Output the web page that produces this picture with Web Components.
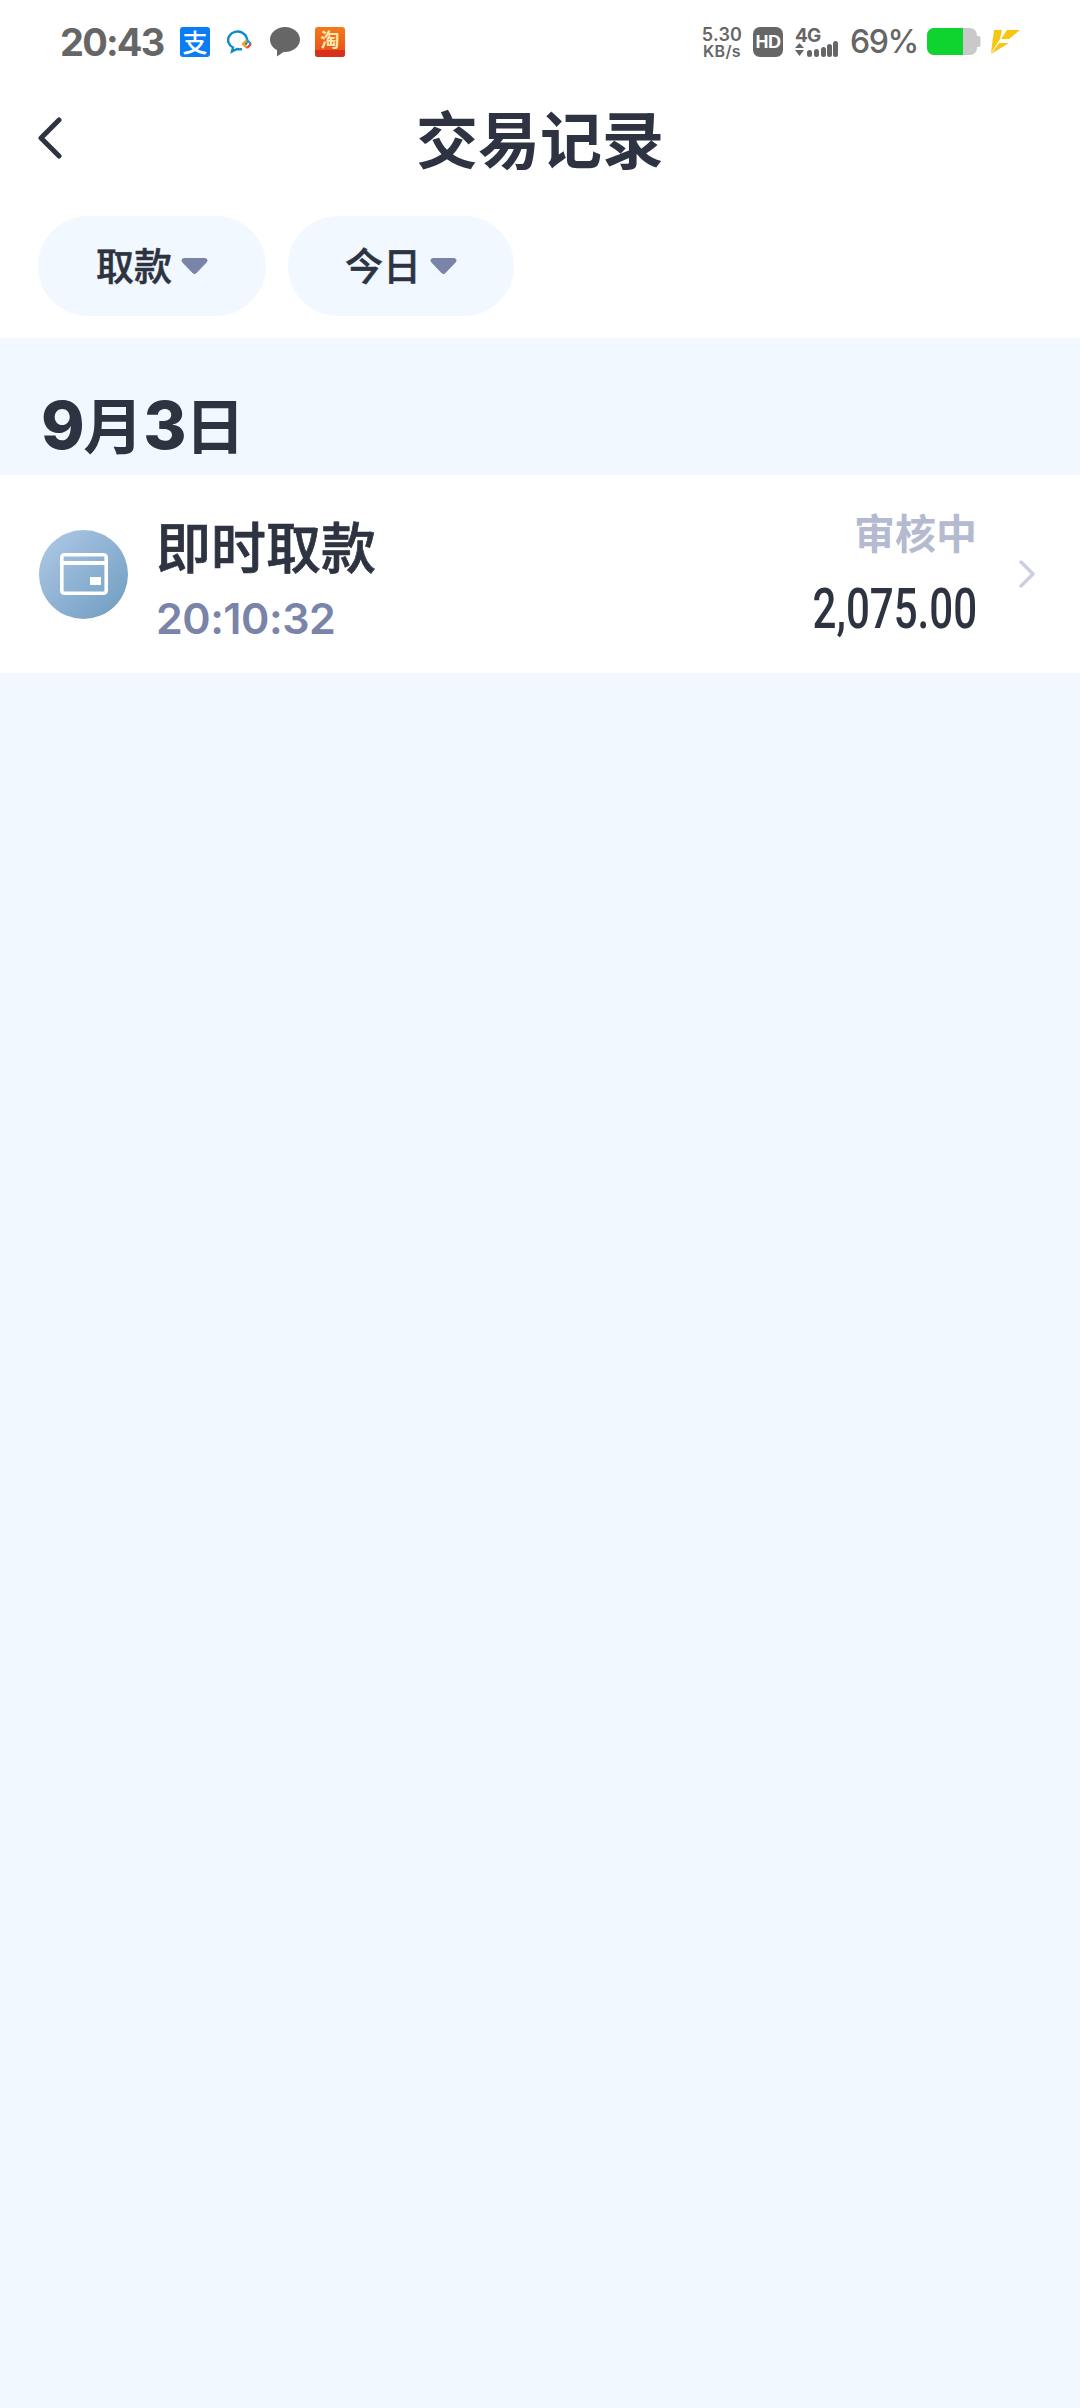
<!DOCTYPE html>
<html lang="zh"><head><meta charset="utf-8"><title>交易记录</title>
<style>
html,body{margin:0;padding:0;background:#f1f8ff}
body{width:1080px;height:2408px;overflow:hidden;font-family:Inter,"Noto Sans CJK SC",sans-serif;color:#2e3342}
</style></head><body>
<records-page></records-page>
<script>
function el(name, css, html){
  customElements.define(name, class extends HTMLElement{
    constructor(){super();this.attachShadow({mode:'open'}).innerHTML='<style>'+css+'</style>'+html;}
  });
}
const CJK='Inter,"Noto Sans CJK SC",sans-serif';
el('status-bar',`
:host{display:flex;align-items:center;height:84px;background:#fff;padding:0 60px;box-sizing:border-box;color:#666;font-family:${CJK}}
.l,.r{display:flex;align-items:center}
.r{margin-left:auto}
.time{font:700 38px/1 Inter,sans-serif;letter-spacing:-1.8px;width:104px;white-space:nowrap}
svg{display:block;flex:none}
.ali{width:30px;height:30px;border-radius:3px;background:#0a7df5;color:#fff;font:500 25px/29px "Noto Sans CJK SC",sans-serif;text-align:center;margin-left:16px}
.tao{width:30px;height:30px;border-radius:3px;background:linear-gradient(#f47a1c,#ea4a17);position:relative;margin-left:15px;color:#ffe9b0;text-align:center;font:700 19px/23px "Noto Sans CJK SC",sans-serif}
.tao i{position:absolute;left:0;right:0;bottom:0;height:7px;background:#d8301a;border-radius:0 0 3px 3px}
.speed{display:flex;flex-direction:column;align-items:center;font:600 18px/17px Inter,sans-serif;width:42px;letter-spacing:.2px}
.speed b{font-weight:600;font-size:16px;line-height:16px;letter-spacing:.3px}
.hd{width:30px;height:30px;border-radius:7px;background:#666;color:#fff;font:700 18px/30px "Liberation Sans",sans-serif;text-align:center;margin-left:10px;letter-spacing:-.5px}
.net{margin-left:12px;position:relative;width:44px;height:30px}
.net span{position:absolute;left:0;top:-1px;font:700 19px/19px Inter,sans-serif;letter-spacing:-.8px}
.pct{font:500 32px/1 Inter,sans-serif;margin-left:11px;width:67px;letter-spacing:-1.4px;white-space:nowrap}
`,`
<div class="l"><span class="time">20:43</span><span class="ali">支</span>
<svg style="margin-left:17px" width="26" height="24" viewBox="0 0 26 24"><path d="M19 14A9.500 8.500 0 1 0 6 17.500L5 21.500l5-2.500a10 10 0 0 0 4 .3" fill="none" stroke="#0f8bc6" stroke-width="2.400" stroke-linecap="round"/><path d="M20 10l-4 4 4 4" fill="none" stroke="#f2a11f" stroke-width="2.400"/><path d="M20 10l4 4" stroke="#1da1d6" stroke-width="2.400"/><path d="M20 18l4-4" stroke="#e8483a" stroke-width="2.400"/></svg>
<svg style="margin-left:17px" width="30" height="30" viewBox="0 0 30 30"><path d="M15 0C6.700 0 0 5.600 0 12.500 0 17 2.800 20.900 7 23.100L7 29.500 13.500 25Q14.300 25 15 25C23.300 25 30 19.400 30 12.500S23.300 0 15 0Z" fill="#666"/></svg>
<span class="tao">淘<i></i></span></div>
<div class="r"><span class="speed">5.30<b>KB/s</b></span><span class="hd">HD</span>
<span class="net"><span>4G</span>
<svg width="44" height="30" viewBox="0 0 44 30"><path d="M0 21l4.500-5 4.500 5zM0 23h9l-4.500 6z" fill="#666"/><rect x="12" y="23" width="5" height="7" rx="2.500" fill="#666"/><rect x="19" y="22" width="5" height="8" rx="2.500" fill="#666"/><rect x="26" y="20" width="5" height="10" rx="2.500" fill="#666"/><rect x="32" y="17" width="5" height="13" rx="2.500" fill="#666"/><rect x="38" y="14" width="5" height="16" rx="2.500" fill="#666"/></svg></span>
<span class="pct">69%</span>
<svg style="margin-left:10px" width="56" height="28" viewBox="0 0 56 28"><rect x="0" y="0" width="50" height="27" rx="7" fill="#c9c9c9"/><path d="M7 0H36V27H7A7 7 0 0 1 0 20V7A7 7 0 0 1 7 0Z" fill="#0fd42f"/><path d="M50 8h1.500a2 2 0 0 1 2 2v7a2 2 0 0 1-2 2H50Z" fill="#c9c9c9"/></svg>
<svg style="margin-left:6px;margin-right:-1px" width="32" height="26" viewBox="0 0 32 26"><path d="M5 1H13L11 10 2 24 5 1ZM18 1H31L20 10H12ZM10 14H20L2 25Z" fill="#f7c512"/></svg>
</div>`);

el('nav-header',`
:host{display:block;position:relative;height:116px;background:#fff}
h1{margin:0;font:700 62px/116px ${CJK};text-align:center;color:#2e3342}
svg{position:absolute;left:37px;top:33px}
`,`<svg width="26" height="42" viewBox="0 0 26 42"><path d="M22 3 4 21l18 18" fill="none" stroke="#2e3342" stroke-width="5" stroke-linecap="round" stroke-linejoin="round"/></svg><h1><slot></slot></h1>`);

el('filter-bar',`
:host{display:flex;gap:22px;background:#fff;padding:16px 38px 22px}
`,`<slot></slot>`);

el('filter-pill',`
:host{display:flex;align-items:center;justify-content:center;gap:9px;width:228px;height:100px;border-radius:50px;background:#f1f8ff;font:500 38px/1 ${CJK};-webkit-text-stroke:.5px #2e3342;color:#2e3342;box-sizing:border-box}
svg{display:block}
`,`<slot></slot><svg width="27" height="16" viewBox="0 0 27 16"><path d="M3 0h21a2.500 2.500 0 0 1 1.800 4.200L15.500 15a3 3 0 0 1-4 0L1.200 4.200A2.500 2.500 0 0 1 3 0Z" fill="#7a83a8"/></svg>`);

el('date-head',`
:host{display:block;height:137px;padding:52px 0 0 41px;box-sizing:border-box;font:700 60px/70px ${CJK};color:#2e3342;background:#f1f8ff;white-space:nowrap}
::slotted(span){font:800 66px/70px Inter,sans-serif;letter-spacing:-1.5px}
`,`<slot></slot>`);

el('record-row',`
:host{display:flex;align-items:center;height:198px;background:#fff;padding:0 45px 0 39px;box-sizing:border-box}
.av{width:89px;height:89px;border-radius:50%;background:linear-gradient(135deg,#b1c9e7,#6d9cbf);display:flex;align-items:center;justify-content:center;flex:none}
.txt{margin-left:28px;display:flex;flex-direction:column;padding-top:12px}
.t{font:500 55px/64px ${CJK};-webkit-text-stroke:.7px #2e3342;color:#2e3342}
.s{font:600 43px/52px Inter,sans-serif;color:#7a83a8;letter-spacing:-.5px;margin-top:12px;margin-left:0}
.r{margin-left:auto;display:flex;flex-direction:column;align-items:flex-end;margin-right:42px;margin-bottom:6px}
.st{font:700 41px/60px ${CJK};color:#b4bad0}
.am{font:500 55px/60px Roboto,sans-serif;color:#2e3342;transform:scaleX(.765);transform-origin:right center;white-space:nowrap;margin-top:15px}
.ch{flex:none;display:block}
`,`<div class="av"><svg width="48" height="42" viewBox="0 0 48 42"><rect x="1.800" y="1.800" width="44.400" height="38.400" rx="2.500" fill="none" stroke="#fff" stroke-width="3.600"/><rect x="2" y="8" width="44" height="4" fill="#fff"/><rect x="30" y="24" width="11" height="8" fill="#fff"/></svg></div>
<div class="txt"><span class="t"><slot name="title"></slot></span><span class="s"><slot name="time"></slot></span></div>
<div class="r"><span class="st"><slot name="status"></slot></span><span class="am"><slot name="amount"></slot></span></div>
<svg class="ch" width="16" height="28" viewBox="0 0 16 28"><path d="M2 2l12 12L2 26" fill="none" stroke="#ccd0de" stroke-width="3.500" stroke-linecap="round" stroke-linejoin="round"/></svg>`);

el('records-page',`
:host{display:block;width:1080px;min-height:2408px;background:#f1f8ff}
`,`<status-bar></status-bar><nav-header>交易记录</nav-header>
<filter-bar><filter-pill>取款</filter-pill><filter-pill style="width:226px">今日</filter-pill></filter-bar>
<date-head><span>9</span>月<span>3</span>日</date-head>
<record-row><span slot="title">即时取款</span><span slot="time">20:10:32</span><span slot="status">审核中</span><span slot="amount">2,075.00</span></record-row>`);
</script></body></html>
